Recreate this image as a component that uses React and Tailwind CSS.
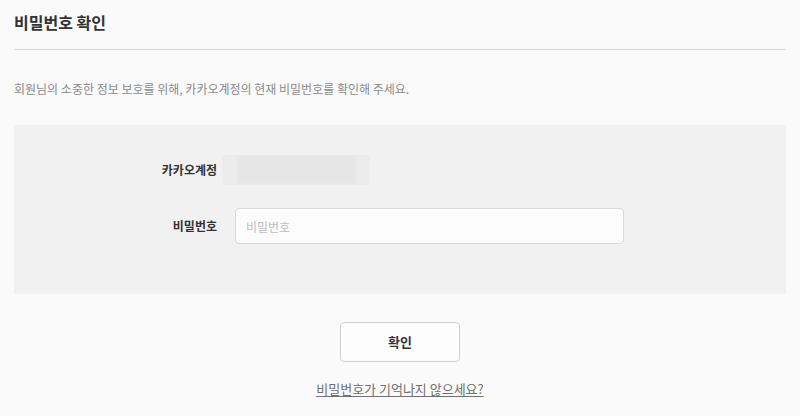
import React from 'react';

const font = { fontFamily: '"Noto Sans CJK KR", "Noto Sans", sans-serif' };

const App = () => {
  return (
    <div className="min-h-screen w-[800px] h-[416px] bg-[#fafafa] px-[14px] overflow-hidden" style={font}>
      {/* 제목 */}
      <div className="h-[50px] pt-[11px] border-b border-[#d4d4d4]">
        <h1 className="text-[16px] leading-[22px] font-bold text-[#333]">비밀번호 확인</h1>
      </div>

      <p className="mt-[30px] text-[12px] leading-[18px] text-[#8a8a8a]">
        회원님의 소중한 정보 보호를 위해, 카카오계정의 현재 비밀번호를 확인해 주세요.
      </p>

      {/* 입력 영역 */}
      <div className="mt-[27px] h-[169px] bg-[#f1f1f1] pt-[30px]">
        <div className="flex items-center h-[30px]">
          <div className="w-[203px] text-right text-[12px] font-bold text-[#333]">카카오계정</div>
          <div className="ml-[5px] w-[148px] h-[30px] bg-[#ececec] flex justify-center items-center">
            <div className="w-[119px] h-[28px] bg-[#e6e6e6] blur-[1px]" />
          </div>
        </div>
        <div className="flex items-center mt-[23px]">
          <div className="w-[203px] text-right text-[12px] font-bold text-[#333]">비밀번호</div>
          <input
            type="password"
            placeholder="비밀번호"
            className="ml-[18px] w-[389px] h-[36px] px-[10px] rounded-[4px] border border-[#d9d9d9] bg-[#fcfcfc] text-[12px] text-[#333] placeholder:text-[#bdbdbd] outline-none"
            style={font}
          />
        </div>
      </div>

      <div className="flex flex-col items-center">
        <button
          className="mt-[28px] w-[120px] h-[40px] rounded-[4px] border border-[#cfcfcf] bg-[#fdfdfd] text-[13px] font-bold text-[#333]"
          style={font}
        >
          확인
        </button>
        <a href="#" className="mt-[18px] text-[13px] leading-[18px] text-[#707070] underline underline-offset-2">
          비밀번호가 기억나지 않으세요?
        </a>
      </div>
    </div>
  );
};

export default App;
